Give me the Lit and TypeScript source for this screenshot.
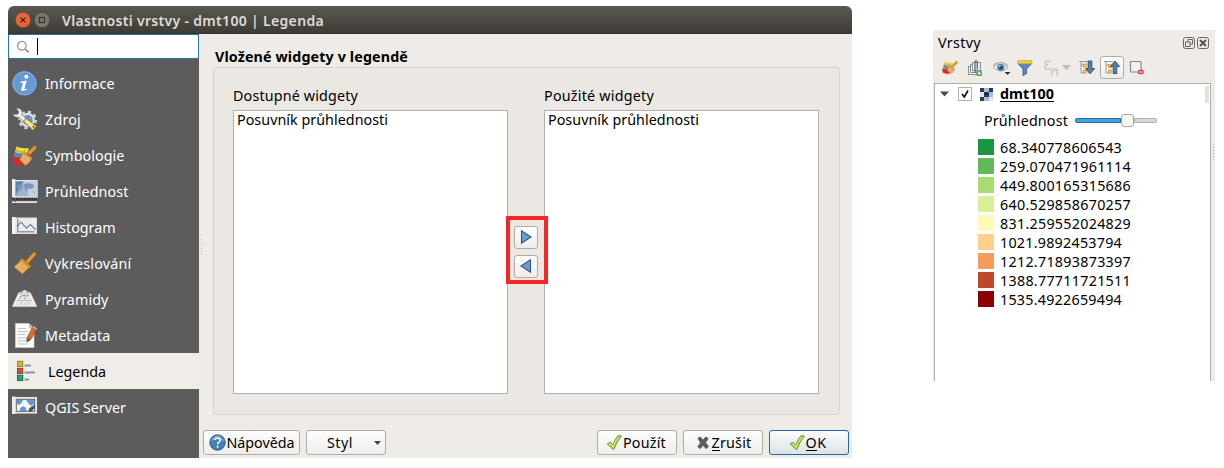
import { LitElement, html, css, svg, TemplateResult } from 'lit';
import { customElement, property } from 'lit/decorators.js';

/** One line of text, tracked so that it fills a given advance width. */
@customElement('fit-text')
class FitText extends LitElement {
  @property({ type: Number }) w = 0;
  @property() text = '';
  /** Index of the mnemonic character, or -1. */
  @property({ type: Number }) key = -1;
  static styles = css`
    :host { display: inline-block; white-space: pre; line-height: 18px; }
    .k { border-bottom: 1px solid currentColor; display: inline-block; line-height: 15px; }
  `;
  render() {
    const k = this.key, t = this.text;
    return k < 0
      ? html`<span class="t">${t}</span>`
      : html`<span class="t">${t.slice(0, k)}<span class="k">${t[k]}</span>${t.slice(k + 1)}</span>`;
  }
  updated() {
    const s = this.renderRoot.querySelector('.t') as HTMLElement;
    s.style.letterSpacing = '0px';
    const natural = s.getBoundingClientRect().width;
    s.style.letterSpacing = (this.w - natural) / this.text.length + 'px';
  }
}

const paintBrush = svg`
  <path d="M4.5 2.5Q10 5 17 4L15 10 8 12 3 8Z" fill="#f0da3a"/><path d="M4 5Q9 9 14 6L13 8Q8 10 3.5 7Z" fill="#c9b02a"/>
  <path d="M2.5 7.5Q6 10 10.5 9L9 14 2 13Z" fill="#5b8ab8"/>
  <path d="M.3 12.5Q5 15 9 13L12.5 19 10.5 21.8Q4 21.5 1 19.5Z" fill="#dc2a22"/>
  <path d="M15.3 8.6 22.8 1.6 24.8 3.6 18.2 11Z" fill="#df9a3c" stroke="#a56d24" stroke-width=".6"/>
  <path d="M12.2 7.6 19.8 14 18 17.4 13.6 21.6 7.8 15.6Z" fill="#e6b573" stroke="#bb7f36" stroke-width=".8"/>
  <path d="M12.2 7.6 19.8 14 19 15.6 11.2 9.8Z" fill="#d3913c"/>
  <path d="M10.4 13 15.6 18.4M12 11.5 17 16.5M15 12.8 10.5 17M17.6 15 12.8 19.5" stroke="#cf9a56" stroke-width=".5"/>`;

const icons: Record<string, TemplateResult> = {
  info: svg`<circle cx="12.5" cy="12.3" r="12.2" fill="#659bd3"/><circle cx="12.5" cy="12.3" r="11.5" fill="none" stroke="#83b0de"/>
    <circle cx="14.3" cy="5.8" r="2" fill="#fff"/>
    <path d="M8.6 10.8 14.7 9.6 12.4 17.5Q12.3 18.7 15.2 17.5L14.9 18.6Q12.3 20.4 10.3 20 8.8 19.5 9.3 17.8L11 11.9H8.5Z" fill="#fff"/>`,
  source: svg`<circle cx="15.6" cy="13" r="8.3" fill="none" stroke="#dcdcdc" stroke-width="2" stroke-dasharray="3.3 3.22"/>
    <circle cx="15.6" cy="13" r="6.2" fill="#6397c9" stroke="#dedede" stroke-width="2.2"/>
    <path d="M4.2 1.2Q9.6 .8 10.2 5.4L9.8 7.6 16.5 14.3 13.6 17 7 10.2Q2.2 11 .9 7.3L5.4 7.4 7 4.9Z" fill="#efefed" stroke="#6f6f6f" stroke-width=".6"/>
    <path d="M11.4 14.2 14.2 11.2 24.6 19.4 20.6 23.2Z" fill="#efd978" stroke="#7d6b2c" stroke-width=".8"/>
    <path d="M14.5 14 20.5 19" stroke="#fff4b4" stroke-width="1.4"/><path d="M20.6 19.2 22.4 20.6" stroke="#5c4f1d" stroke-width="1.3"/>`,
  paint: svg`<g transform="translate(0 1)">${paintBrush}</g>`,
  transp: svg`<path d="M2.5 1.6H25V18H2.5Z" fill="#9fb4cf" stroke="#e3e7eb" stroke-width="1.4"/><path d="M12 2H24.5V17.5H17Z" fill="#c3cede"/>
    <path d="M3.5 17 3.5 2.5H11Z" fill="#5a81b4"/>
    <path d="M5 6 9 5 11 7 9 10 8 13 6 9ZM12 5 17 4 22 6 21 9 18 10 16 9 15 13 13 10ZM21 12l2 1-1 1Z" fill="#7f95b3"/>
    <rect x="0" y="0" width="3.2" height="18.5" fill="#eee"/><path d="M0 20H25" stroke="#2f3133" stroke-width="2.4" stroke-dasharray="1.4 .6"/>
    <path d="M0 23.1H25" stroke="#f3f3f3" stroke-width="1.6"/><rect x="2.6" y="19" width="1.4" height="4" fill="#2c64b0"/>`,
  hist: svg`<rect x="3" y="3" width="21.5" height="15.5" fill="#ececec" stroke="#dcdcdc"/><rect x="0" y="2" width="3.4" height="17" fill="#f4f4f4"/>
    <path d="M5.7 4V16.7H22.5" fill="none" stroke="#999" stroke-width="1.6"/><path d="M5 11 9 7.2 14.5 13 18.5 9.5 23.5 14.5" fill="none" stroke="#36549a" stroke-width="1.1" stroke-dasharray="1.7 .5"/>`,
  brush: svg`<path d="M13.6 10.2 22 .8 24.4 3 16.3 12.6Z" fill="#e09a34" stroke="#a56a1b" stroke-width=".8"/>
    <path d="M10 7.8 18.8 15.4 16 17.3 10.5 23 2 15.8 8 10.5Z" fill="#e9b566" stroke="#b27428" stroke-width=".8"/>
    <path d="M10 7.8 18.8 15.4 17 17 8 9.5Z" fill="#d78f2b"/><path d="M5 14l6 6M7 12l7 7M12 13l-7 6M14 15l-6 6" stroke="#cf9548" stroke-width=".6"/>`,
  pyramid: svg`<path d="M6.5 6 9.5 5 12.5 3.2 16 5 18.5 6 24.8 19.5H.5Z" fill="#e6e6e6" stroke="#cfcfcf" stroke-width=".8"/>
    <path d="M8.5 7 11 5.5M14 5 16.5 7M8 10 10.5 8.5 14 9 17 8.5M12 11l2 1M13 7v1" stroke="#8a8a8a" stroke-width=".9" fill="none"/>
    <path d="M5 13.5H20M9 15.5l.8 2M16 15.5l1 1.5M7 10l.8 2M18 10l.8 2M13 16v1.5" stroke="#b3b3b3" stroke-width=".8" fill="none"/>
    <path d="M2 18 7 8M23 18 18 8" stroke="#fafafa" stroke-width="1.2"/>`,
  meta: svg`<path d="M3.5 .5H17L22 5.5V24.5H3.5Z" fill="#fafafa" stroke="#d9d9d9" stroke-width=".6"/><path d="M17 .5V5.5H22Z" fill="#bbb"/>
    <path d="M6 5.5H14M6 8.5H16M6 11.5H14M6 15H15M6 18H18M6 21H16" stroke="#c4c4c4" stroke-width="1.1"/>
    <path d="M15.2 14.5 20.8 3.5 24.8 6 18.8 16.5 14.8 18.8Z" fill="#e0682c" stroke="#9c4a22" stroke-width=".7"/>
    <path d="M15.2 14.5 18.8 16.5 14.8 18.8Z" fill="#555"/><path d="M20.8 3.5 24.8 6" stroke="#bfc3c6" stroke-width="1.4"/>`,
  legend: svg`<g stroke-width=".9"><rect x="5.5" y="2.3" width="5.3" height="5.3" fill="#c9bd34" stroke="#8d8424"/>
    <rect x="5.5" y="9.3" width="5.3" height="5.3" fill="#c8543a" stroke="#8c3a28"/><rect x="5.5" y="16.3" width="5.3" height="5.3" fill="#1fa577" stroke="#0d6c4c"/></g>
    <path d="M12.5 6.5H19M12.5 13.5H23M12.5 20.5H17" stroke="#7d9aab" stroke-width="2"/>`,
  server: svg`<rect x="2.5" y="2.6" width="22" height="15.4" fill="#e4e4e4" stroke="#f2f2f2"/><rect x="4.3" y="4.3" width="18.4" height="12" fill="#f5f5f5" stroke="#555" stroke-width=".9"/>
    <path d="M5 5H11L9.5 8 7 10 5 9ZM14 5H22V9L19 11 16.5 8.5ZM8 13.5 11 11 14 13 14.5 16H8Z" fill="#6597d0"/><path d="M16 16.5 17.5 13 23 9.5V12.5L19.5 16.5Z" fill="#4c5257"/>
    <rect x="0" y="1.5" width="3.2" height="17.5" fill="#eee"/>`,
};

const check = svg`<path d="M1.2 9.8 4.6 8.2 6.8 11.2Q9 4.6 12.2 1.6L15.4 2Q10.8 7.4 7.6 15.8Q4.6 13.2 1.2 9.8Z" fill="#b5d94c" stroke="#5f8a34" stroke-width=".9"/><path d="M3.2 10 5 9.6 7 12.6Q9.6 5.8 13 2.8" fill="none" stroke="#dcf08e" stroke-width=".9"/>`;

const tools = {
  group: svg`<g fill="#f1efec" stroke="#89938f" stroke-width="1"><rect x="1.5" y="6.5" width="8" height="8"/><rect x="3.5" y="4.5" width="8" height="8"/><rect x="5.5" y="2.5" width="8" height="8"/></g>
    <path d="M8 13V2.5Q8 .5 9 .5 10.2 .5 10.2 2.5V9.5" fill="none" stroke="#37566f" stroke-width="1.1"/>
    <rect x="9.5" y="10.5" width="5.5" height="5.5" rx="1" fill="#5d9c61"/><path d="M12.2 11.5V15M10.5 13.2H14" stroke="#fff" stroke-width="1"/>`,
  eye: svg`<path d="M0 7.5Q7 1 15 7.5 8 14 0 7.5Z" fill="#f4f4f4" stroke="#a1a6aa" stroke-width=".9"/><path d="M0 5.5Q7-.5 15 5.5" fill="none" stroke="#b0b4b7" stroke-width="1.3"/>
    <circle cx="7.8" cy="7.6" r="3.6" fill="#5186b4"/><circle cx="7.8" cy="7.6" r="1.7" fill="#1d3853"/><circle cx="6.8" cy="6.2" r=".8" fill="#fff"/><path d="M11.5 12H17.5L14.5 15Z" fill="#333"/>`,
  filter: svg`<path d="M1 3.5 6 9V15.5L9.6 13.6V9L14.6 3.5Z" fill="#5b87ba" stroke="#3c6595" stroke-width=".9"/><path d="M.8 .8H14.8V3.8H.8Z" fill="#f0da3c" stroke="#b7a42c" stroke-width=".8"/>`,
  expr: svg`<path d="M7.6 2Q6 .6 4 1 1.6 1.8 2.4 3.6 3 4.6 5.2 4.7 2.3 4.9 1.6 6.7 1.3 8.8 4 9.3 6 9.6 7.6 8.2" fill="none" stroke="#c6c4c1" stroke-width="1.3"/><path d="M8.7 15.4V9.4H14V15.4M11.3 11.4V9.4" fill="none" stroke="#d0cecb" stroke-width="2"/>`,
  down: svg`<path d="M2 1.5V13H5M2 5H5" fill="none" stroke="#9b9b9b" stroke-width="1"/><path d="M0 1.5H9" stroke="#9b9b9b"/><g fill="#f7ead5" stroke="#e6942d" stroke-width="1.1"><rect x="4.6" y="4.2" width="2.6" height="2.6"/><rect x="4.6" y="10.4" width="2.6" height="2.6"/></g><path d="M9.2 1H12.8V8.5H15.6L11 13.8 6.6 8.5H9.2Z" fill="#527fab" stroke="#264d79" stroke-width=".9"/>`,
  up: svg`<path d="M2 1.5V13H5M2 5H5" fill="none" stroke="#9b9b9b" stroke-width="1"/><path d="M0 1.5H9" stroke="#9b9b9b"/><g fill="#f7ead5" stroke="#e6942d" stroke-width="1.1"><rect x="4.6" y="4.8" width="2.6" height="2.6"/><rect x="4.6" y="10.4" width="2.6" height="2.6"/></g><path d="M9.2 13.6H12.8V6.4H15.6L11 1 6.6 6.4H9.2Z" fill="#527fab" stroke="#264d79" stroke-width=".9"/>`,
  remove: svg`<rect x="1.5" y="1.5" width="10.5" height="10.5" rx="1" fill="#f2f1ef" stroke="#81898c" stroke-width="1.2"/><rect x="8.8" y="9.8" width="6" height="4.4" rx="1.6" fill="#e4384b"/><path d="M10 12H13.6" stroke="#fff" stroke-width="1.1"/>`,
};

const nav: [string, string, number][] = [
  ['info', 'Informace', 69.5], ['source', 'Zdroj', 36], ['paint', 'Symbologie', 79.5], ['transp', 'Průhlednost', 83.5],
  ['hist', 'Histogram', 70.5], ['brush', 'Vykreslování', 86.5], ['pyramid', 'Pyramidy', 63.5], ['meta', 'Metadata', 65.5],
  ['legend', 'Legenda', 58], ['server', 'QGIS Server', 81],
];

const classes: [string, string, number][] = [
  ['#1a9641', '68.340778606543', 122], ['#62b957', '259.070471961114', 131], ['#a9dc70', '449.800165315686', 131],
  ['#d8ee97', '640.529858670257', 131], ['#fff8b8', '831.259552024829', 131], ['#fed08a', '1021.9892453794', 122],
  ['#f49c5a', '1212.71893873397', 131], ['#bf472a', '1388.77711721511', 131], ['#8e0000', '1535.4922659494', 122],
];

@customElement('app-root')
class AppRoot extends LitElement {
  static styles = css`
    :host { display: flex; align-items: flex-start; box-sizing: border-box; width: 1224px; height: 468px; padding: 6px 9px 0 8px;
      background: #fff; color: #000; font: 14.3px "Noto Sans", "Open Sans", sans-serif; justify-content: space-between; overflow: hidden; }
    * { box-sizing: border-box; }
    svg { display: block; flex: none; overflow: visible; }
    .dialog { width: 844px; height: 452px; display: flex; flex-direction: column; background: #efebe7; border-radius: 6px 6px 0 0; }
    .title { height: 28px; flex: none; display: flex; align-items: center; padding-left: 7px; background: linear-gradient(#5b584f, #3d3c37);
      border-radius: 6px 6px 0 0; border-bottom: 1px solid #353430; color: #dfdbd2; font-weight: 600; font-size: 14px; }
    .title fit-text { margin: 2px 0 0 12px; }
    .title .max { margin-left: 3px; }
    .main { flex: 1; display: flex; min-height: 0; }
    .side { width: 191px; background: #5c5c5c; display: flex; flex-direction: column; }
    .search { height: 25px; background: #fff; border: 1px solid #2276a8; border-radius: 2px; display: flex; align-items: center; padding-left: 8px; margin-bottom: 6px; }
    .caret { width: 1px; height: 17px; background: #000; margin-left: 8px; }
    .item { height: 36px; display: flex; align-items: center; padding-left: 4px; color: #fff; gap: 8px; }
    .item fit-text { margin-top: 2px; }
    .item.on { background: #f0ede8; color: #000; gap: 11px; }
    .grip { width: 1px; height: 16px; background: repeating-linear-gradient(#bdb9b4 0 1px, transparent 1px 3px); }
    .main > .grip { margin: 205px 0 0 2px; }
    .body { flex: 1; display: flex; flex-direction: column; padding: 14px 3px 0 1px; }
    .heading { font-weight: 700; height: 19px; padding-left: 12px; line-height: 18px; }
    .group { margin: 0 9px 0 10px; height: 348px; border: 1px solid #d8d4cf; border-radius: 3px; background: #ebe7e3; display: flex; padding: 19px 20px 0 19px; }
    .col { width: 275px; }
    .col > fit-text { display: block; height: 23px; }
    .box { height: 284px; border: 1px solid #b3b0ac; background: #fff; padding: 0 0 0 3px; }
    .box fit-text { display: block; }
    .mid { width: 36px; display: flex; justify-content: center; }
    .mark { flex: none; width: 42px; height: 68px; margin: 129px -1px 0 1px; border: 4px solid #fb2424; display: flex; flex-direction: column; align-items: center; gap: 6px; padding: 6px 2px 0 0; z-index: 1; background: #ebe7e3; }
    .btn { border: 1px solid #b0ada9; border-radius: 3px; background: linear-gradient(#fdfdfc, #f0eeec); display: flex; align-items: center; }
    .mark .btn { width: 24px; height: 23px; justify-content: center; }
    .mark svg { margin-top: -1px; }
    .foot { display: flex; gap: 6px; margin-top: 15px; }
    .foot .btn { height: 25px; width: 80px; justify-content: center; gap: 1px; }
    .foot .help { width: 97px; padding-right: 1px; }
    .foot .help fit-text { margin-right: -1px; }
    .foot .style { justify-content: flex-end; padding-right: 4px; gap: 21px; }
    .foot .apply { margin-left: auto; padding-right: 2px; }
    .foot .ok { border-color: #22699b; background: linear-gradient(#fbfcfc, #dce3e6); padding-right: 3px; }
    .panel { width: 282px; height: 351px; margin: 24px 0 0; background: #efebe7; display: grid; grid-template-columns: 277px 1fr; padding-left: 1px; }
    .left { display: flex; flex-direction: column; }
    .ptitle { height: 26px; display: flex; align-items: center; padding: 0 2px 1px 4px; gap: 2px; }
    .ptitle fit-text { margin: 1px auto 0 0; }
    .tools { height: 27px; display: flex; align-items: center; padding-left: 8px; padding-bottom: 4px; }
    .tools .a { margin-left: 9px; } .tools .b { margin-left: 10px; } .tools .c { margin-left: 8px; } .tools .d { margin-left: 10px; }
    .tools .e { margin-left: 3px; } .tools .f { margin-left: 8px; }
    .on-tool { width: 24px; height: 23px; margin-left: 5px; justify-content: center; }
    .tools .g { margin-left: 5px; }
    .tree { flex: 1; border: 1px solid #b3b0ac; border-bottom: 0; background: #fff; display: flex; flex-direction: column; }
    .layer { height: 20px; display: flex; align-items: center; padding: 0 1px 0 5px; }
    .cb { width: 14px; height: 14px; border: 1px solid #b3b0ac; background: #fff; margin: -1px 8px 0 9px; }
    .name { display: flex; font-weight: 700; margin: -1px 0 0 7px; height: 16px; border-bottom: 1px solid #000; }
    .name fit-text { line-height: 16px; }
    .bar { width: 4px; height: 17px; background: #e3e1de; margin-left: auto; }
    .op { height: 34px; display: flex; align-items: center; padding-left: 49px; gap: 7px; }
    .op .slider { margin-top: -1px; }
    .slider { width: 82px; height: 14px; display: flex; align-items: center; }
    .fill { width: 46px; height: 5px; border: 1px solid #2d6e9e; background: #41a2e2; border-radius: 2px 0 0 2px; }
    .knob { width: 13px; height: 13px; border: 1px solid #aaa7a3; border-radius: 3px; background: #f7f6f5; }
    .rest { flex: 1; height: 5px; border: 1px solid #b3b0ac; background: #dbd8d4; border-radius: 0 2px 2px 0; }
    .cls { height: 19px; display: flex; align-items: flex-start; padding: 1px 0 0 43px; gap: 6px; }
    .sw { width: 16px; height: 16px; }
    .panel > .grip { margin: 114px 0 0 2px; }
  `;

  render() {
    return html`
      <div class="dialog">
        <div class="title">
          <svg width="16" height="16" viewBox="0 0 16 16"><circle cx="8" cy="8" r="7.7" fill="#ea6535" stroke="#4a4740" stroke-width=".6"/><path d="M5.6 5.6 10.4 10.4M10.4 5.6 5.6 10.4" stroke="#4c2010" stroke-width="1.3"/></svg>
          <svg class="max" width="16" height="16" viewBox="0 0 16 16"><circle cx="8" cy="8" r="7.7" fill="#7a776e" stroke="#403e39" stroke-width=".6"/><rect x="5.5" y="5.5" width="5" height="5" fill="none" stroke="#35332e" stroke-width="1.2"/></svg>
          <fit-text text="Vlastnosti vrstvy - dmt100 | Legenda" w="262"></fit-text>
        </div>
        <div class="main">
          <div class="side">
            <div class="search">
              <svg width="12" height="12" viewBox="0 0 12 12" fill="none" stroke="#888"><circle cx="4.8" cy="4.8" r="4.3" stroke-width="1.1"/><path d="M8 8 11.8 11.4" stroke-width="1.6"/></svg>
              <div class="caret"></div>
            </div>
            ${nav.map(([i, t, w]) => html`<div class="item ${i === 'legend' ? 'on' : ''}">
              <svg width="25" height="25" viewBox="0 0 25 25">${icons[i]}</svg><fit-text .text=${t} .w=${w}></fit-text></div>`)}
          </div>
          <div class="grip"></div>
          <div class="body">
            <div class="heading"><fit-text text="Vložené widgety v legendě" w="193"></fit-text></div>
            <div class="group">
              <div class="col"><fit-text text="Dostupné widgety" w="125"></fit-text>
                <div class="box"><fit-text text="Posuvník průhlednosti" w="151"></fit-text></div></div>
              <div class="mid"><div class="mark">
                <div class="btn"><svg width="12" height="14" viewBox="0 0 12 14"><path d="M1.5 .8V13.2L11 7Z" fill="#6c9bd0" stroke="#33577f" stroke-width="1.1"/></svg></div>
                <div class="btn"><svg width="12" height="14" viewBox="0 0 12 14"><path d="M10.5 .8V13.2L1 7Z" fill="#6c9bd0" stroke="#33577f" stroke-width="1.1"/></svg></div>
              </div></div>
              <div class="col"><fit-text text="Použité widgety" w="110"></fit-text>
                <div class="box"><fit-text text="Posuvník průhlednosti" w="151"></fit-text></div></div>
            </div>
            <div class="foot">
              <div class="btn help"><svg width="17" height="17" viewBox="0 0 17 17"><circle cx="8.5" cy="8.5" r="7.7" fill="#4580b8" stroke="#245585"/><path d="M1.8 7Q8 4 15.2 7 13 1.5 8.5 1.5 4 1.5 1.8 7Z" fill="#77a5d0"/><path d="M5.9 6Q6.2 3.9 8.6 3.9 11.2 4 11.1 6.2 11 7.4 9.6 8.3 8.6 9 8.6 10.4" fill="none" stroke="#fff" stroke-width="1.4"/><circle cx="8.6" cy="12.8" r="1" fill="#fff"/></svg>
                <fit-text text="Nápověda" w="68"></fit-text></div>
              <div class="btn style"><fit-text text="Styl" w="26"></fit-text><svg width="7" height="4" viewBox="0 0 7 4"><path d="M0 0H7L3.5 4Z" fill="#444"/></svg></div>
              <div class="btn apply"><svg width="16" height="17" viewBox="0 0 16 17">${check}</svg><fit-text text="Použít" w="43"></fit-text></div>
              <div class="btn"><svg width="16" height="16" viewBox="0 0 16 16"><path d="M3 3.2 5.4 2 8 5.2 10.8 2 13.2 3.6 10.5 7.6 13.4 11.6 11 13.6 8 10.3 5.2 13.6 2.8 11.8 5.6 7.8Z" fill="#5d6063" stroke="#484a4c" stroke-width=".8"/></svg><fit-text text="Zrušit" key="0" w="40"></fit-text></div>
              <div class="btn ok"><svg width="16" height="17" viewBox="0 0 16 17">${check}</svg><fit-text text="OK" key="0" w="21"></fit-text></div>
            </div>
          </div>
        </div>
      </div>
      <div class="panel">
        <div class="left">
          <div class="ptitle"><fit-text text="Vrstvy" w="43"></fit-text>
            <svg width="12" height="12" viewBox="0 0 12 12" fill="none" stroke="#666"><rect x=".5" y=".5" width="11" height="11" rx="2"/><rect x="5" y="2.5" width="4.5" height="4.5"/><rect x="2.5" y="5" width="4.5" height="4.5" fill="#efebe7"/></svg>
            <svg width="12" height="12" viewBox="0 0 12 12" fill="none" stroke="#666"><rect x=".5" y=".5" width="11" height="11" rx="2"/><path d="M3 3 9 9M9 3 3 9" stroke="#555" stroke-width="2"/></svg>
          </div>
          <div class="tools">
            <svg width="16" height="16" viewBox="0 0 25 25">${paintBrush}</svg>
            <svg class="a" width="16" height="16">${tools.group}</svg>
            <svg class="b" width="16" height="16">${tools.eye}</svg>
            <svg class="c" width="16" height="16">${tools.filter}</svg>
            <svg class="d" width="16" height="16">${tools.expr}</svg>
            <svg class="e" width="9" height="5"><path d="M0 0H9L4.5 5Z" fill="#bfbdba"/></svg>
            <svg class="f" width="16" height="15">${tools.down}</svg>
            <div class="btn on-tool"><svg width="16" height="15">${tools.up}</svg></div>
            <svg class="g" width="16" height="15">${tools.remove}</svg>
          </div>
          <div class="tree">
            <div class="layer">
              <svg width="9" height="6" viewBox="0 0 9 6"><path d="M0 .5H9L4.5 5.5Z" fill="#4c4c4c"/></svg>
              <div class="cb"><svg width="12" height="12" viewBox="0 0 12 12"><path d="M3 6 5.3 9 9 2.5" fill="none" stroke="#111" stroke-width="1.7"/></svg></div>
              <svg width="13" height="13" viewBox="0 0 13 13"><rect width="13" height="13" fill="#a9bdd8"/><path d="M0 0H4V4H0ZM9 0H13V4H9ZM4 4H9V9H4ZM0 9H4V13H0Z" fill="#2b3c55"/><path d="M0 4H4V9H0ZM9 9H13V13H9Z" fill="#dfe7f1"/><path d="M5 5H7V7H5Z" fill="#0e1a2c"/></svg>
              <div class="name"><fit-text text="dmt100" w="54"></fit-text></div>
              <div class="bar"></div>
            </div>
            <div class="op"><fit-text text="Průhlednost" w="84"></fit-text>
              <div class="slider"><div class="fill"></div><div class="knob"></div><div class="rest"></div></div></div>
            ${classes.map(([c, t, w]) => html`<div class="cls"><div class="sw" style="background:${c}"></div><fit-text .text=${t} .w=${w}></fit-text></div>`)}
          </div>
        </div>
        <div class="grip"></div>
      </div>`;
  }
}
